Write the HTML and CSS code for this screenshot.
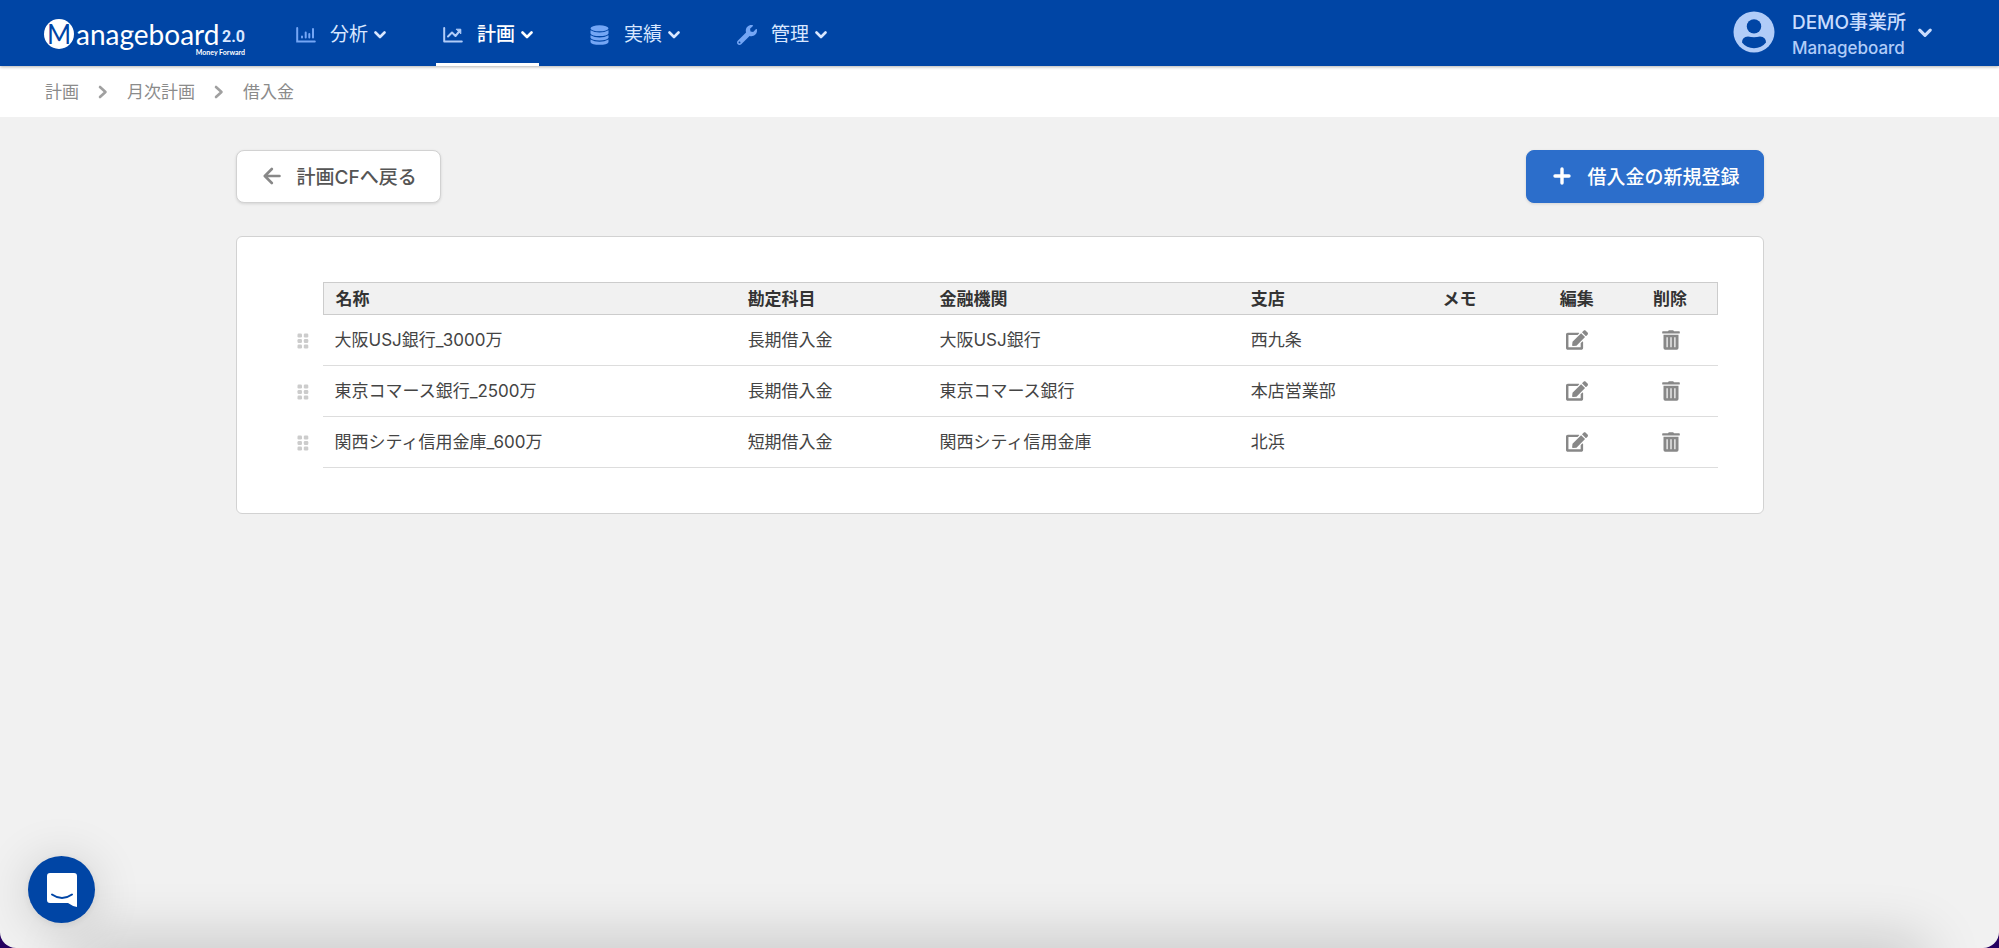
FILE: index.html
```
<!DOCTYPE html>
<html lang="ja">
<head>
    <meta charset="UTF-8">
    <meta name="viewport" content="width=device-width, initial-scale=1.0">
    <title>借入金 | Manageboard</title>
    <link rel="stylesheet" href="styles.css">
</head>
<body>
    <!-- Shared icons -->
    <svg class="sprite" aria-hidden="true">
        <symbol id="chevron-down" viewBox="0 0 12 8">
            <path d="M1.500 1.500 6 6l4.500-4.500" fill="none" stroke="currentColor" stroke-width="2.600" stroke-linecap="round" stroke-linejoin="round"/>
        </symbol>
        <symbol id="chevron-right" viewBox="0 0 10 14">
            <path d="M2 2l5.500 5L2 12" fill="none" stroke="currentColor" stroke-width="2.600" stroke-linecap="round" stroke-linejoin="round"/>
        </symbol>
        <symbol id="grip" viewBox="0 0 12 16">
            <rect x="0.500" y="0.500" width="4.500" height="4" rx="1.200"/><rect x="6.800" y="0.500" width="4.500" height="4" rx="1.200"/>
            <rect x="0.500" y="6" width="4.500" height="4" rx="1.200"/><rect x="6.800" y="6" width="4.500" height="4" rx="1.200"/>
            <rect x="0.500" y="11.500" width="4.500" height="4" rx="1.200"/><rect x="6.800" y="11.500" width="4.500" height="4" rx="1.200"/>
        </symbol>
        <symbol id="edit" viewBox="0 0 576 512">
            <path d="M402.600 83.200l90.200 90.200c3.800 3.800 3.800 10 0 13.800L274.400 405.600l-92.800 10.300c-12.400 1.400-22.900-9.100-21.500-21.500l10.300-92.800L388.800 83.200c3.800-3.800 10-3.800 13.800 0zm162-22.900l-48.800-48.800c-15.200-15.200-39.900-15.200-55.200 0l-35.400 35.400c-3.800 3.800-3.800 10 0 13.800l90.200 90.200c3.800 3.800 10 3.800 13.800 0l35.400-35.400c15.200-15.300 15.200-40 0-55.200zM384 346.200V448H64V128h229.800c3.200 0 6.200-1.300 8.500-3.500l40-40c7.600-7.600 2.200-20.500-8.500-20.500H48C21.500 64 0 85.500 0 112v352c0 26.500 21.500 48 48 48h352c26.500 0 48-21.500 48-48V306.200c0-10.700-12.900-16-20.500-8.500l-40 40c-2.200 2.300-3.500 5.300-3.500 8.500z"/>
        </symbol>
        <symbol id="trash" viewBox="0 0 18 20">
            <path d="M.8 1.300h5.200L6.800.3h4.400l.8 1h5.200q.6 0 .6.600v1q0 .6-.6.600H.8q-.6 0-.6-.6v-1q0-.6.600-.6z"/>
            <path fill-rule="evenodd" d="M1.500 4.800h15v13.200q0 1.700-1.700 1.700H3.200q-1.700 0-1.700-1.700zM4.500 7.200v10h1.200v-10zM8.400 7.200v10h1.200v-10zM12.300 7.200v10h1.200v-10z"/>
        </symbol>
    </svg>

    <header class="navbar">
        <a href="#" class="logo">
            <span class="logo-mark">M</span>
            <span class="logo-name">anageboard</span>
            <span class="logo-version">2.0</span>
            <span class="logo-company">Money Forward</span>
        </a>
        <nav class="menu">
            <a href="#" class="menu-item">
                <svg class="menu-icon" viewBox="0 0 20 20" fill="none" stroke="currentColor" stroke-width="2" stroke-linecap="round">
                    <path d="M1.200 3v13.600h17.600M6 11.500v1M9.700 7.500v5M13.300 9v3.500M17 4v8.500"/>
                </svg>
                <span class="menu-label">分析</span>
                <svg class="menu-arrow"><use href="#chevron-down"/></svg>
            </a>
            <a href="#" class="menu-item active">
                <svg class="menu-icon" viewBox="0 0 20 20" fill="none" stroke="currentColor" stroke-width="2" stroke-linecap="round" stroke-linejoin="round">
                    <path d="M1.200 3v13.600h17.600M5 11.500l4-4 3.500 3.500L17 5.500"/>
                    <path d="M13.500 4.200h4.300v4.300z" fill="currentColor" stroke-width="1"/>
                </svg>
                <span class="menu-label">計画</span>
                <svg class="menu-arrow"><use href="#chevron-down"/></svg>
            </a>
            <a href="#" class="menu-item">
                <svg class="menu-icon" viewBox="0 0 20 20" fill="currentColor">
                    <ellipse cx="9.500" cy="3.300" rx="9" ry="3"/>
                    <path d="M.5 5.200q4 2.400 9 2.400t9-2.400v3.200q-1.500 2.600-9 2.600T.5 8.400z"/>
                    <path d="M.5 10.200q4 2.200 9 2.200t9-2.200v2.600q-1.500 2.600-9 2.600T.5 12.800z"/>
                    <path d="M.5 14.600q4 2.200 9 2.200t9-2.200v2.600q-1.500 2.600-9 2.600T.5 17.200z"/>
                </svg>
                <span class="menu-label">実績</span>
                <svg class="menu-arrow"><use href="#chevron-down"/></svg>
            </a>
            <a href="#" class="menu-item">
                <svg class="menu-icon" viewBox="0 0 512 512" fill="currentColor">
                    <path d="M507.700 109.100c-2.200-9-13.500-12.100-20.100-5.500l-74.400 74.400-67.900-11.300L334 98.900l74.400-74.400c6.600-6.600 3.400-17.900-5.700-20.200-47.400-11.700-99.600.9-136.600 37.900-39.600 39.600-50.500 97.100-34.100 147.200L18.700 402.800c-25 25-25 65.500 0 90.500s65.500 25 90.500 0l213.200-213.200c50.100 16.700 107.500 5.700 147.400-34.200 37.100-37.100 49.700-89.300 37.900-136.800zM64 472c-13.300 0-24-10.700-24-24 0-13.300 10.700-24 24-24s24 10.700 24 24c0 13.300-10.700 24-24 24z"/>
                </svg>
                <span class="menu-label">管理</span>
                <svg class="menu-arrow"><use href="#chevron-down"/></svg>
            </a>
        </nav>
        <button type="button" class="account">
            <svg class="avatar" viewBox="0 0 42 42">
                <circle cx="21" cy="21" r="20.500" fill="#b1ccf8"/>
                <circle cx="21" cy="15.400" r="7.200" fill="#0045a5"/>
                <path d="M9 31.500q0-5.500 6-6 6 1.500 12 0 6 .5 6 6-4.500 5.700-12 5.700T9 31.500z" fill="#0045a5"/>
            </svg>
            <span class="account-text">
                <span class="account-office">DEMO事業所</span>
                <span class="account-user">Manageboard</span>
            </span>
            <svg class="account-arrow"><use href="#chevron-down"/></svg>
        </button>
    </header>

    <nav class="breadcrumb">
        <a href="#">計画</a>
        <svg><use href="#chevron-right"/></svg>
        <a href="#">月次計画</a>
        <svg><use href="#chevron-right"/></svg>
        <span>借入金</span>
    </nav>

    <main class="container">
        <div class="actions">
            <button type="button" class="btn btn-back">
                <svg viewBox="0 0 18 18" fill="none" stroke="currentColor" stroke-width="2.600" stroke-linecap="round" stroke-linejoin="round">
                    <path d="M8.800 2 1.800 9l7 7M2 9h14.500"/>
                </svg>
                計画CFへ戻る
            </button>
            <button type="button" class="btn btn-add">
                <svg viewBox="0 0 18 18" fill="none" stroke="currentColor" stroke-width="3.400" stroke-linecap="round">
                    <path d="M9 2v14M2 9h14"/>
                </svg>
                借入金の新規登録
            </button>
        </div>

        <section class="card">
            <table class="loans">
                <colgroup>
                    <col class="col-grip">
                    <col>
                    <col class="col-account">
                    <col class="col-bank">
                    <col class="col-branch">
                    <col class="col-memo">
                    <col class="col-action">
                    <col class="col-action">
                </colgroup>
                <thead>
                    <tr>
                        <td></td>
                        <th>名称</th>
                        <th>勘定科目</th>
                        <th>金融機関</th>
                        <th>支店</th>
                        <th>メモ</th>
                        <th class="center">編集</th>
                        <th class="center">削除</th>
                    </tr>
                </thead>
                <tbody>
                    <tr>
                        <td class="grip"><svg><use href="#grip"/></svg></td>
                        <td>大阪USJ銀行_3000万</td>
                        <td>長期借入金</td>
                        <td>大阪USJ銀行</td>
                        <td>西九条</td>
                        <td></td>
                        <td class="center"><button type="button" aria-label="編集"><svg class="icon-edit"><use href="#edit"/></svg></button></td>
                        <td class="center"><button type="button" aria-label="削除"><svg class="icon-trash"><use href="#trash"/></svg></button></td>
                    </tr>
                    <tr>
                        <td class="grip"><svg><use href="#grip"/></svg></td>
                        <td>東京コマース銀行_2500万</td>
                        <td>長期借入金</td>
                        <td>東京コマース銀行</td>
                        <td>本店営業部</td>
                        <td></td>
                        <td class="center"><button type="button" aria-label="編集"><svg class="icon-edit"><use href="#edit"/></svg></button></td>
                        <td class="center"><button type="button" aria-label="削除"><svg class="icon-trash"><use href="#trash"/></svg></button></td>
                    </tr>
                    <tr>
                        <td class="grip"><svg><use href="#grip"/></svg></td>
                        <td>関西シティ信用金庫_600万</td>
                        <td>短期借入金</td>
                        <td>関西シティ信用金庫</td>
                        <td>北浜</td>
                        <td></td>
                        <td class="center"><button type="button" aria-label="編集"><svg class="icon-edit"><use href="#edit"/></svg></button></td>
                        <td class="center"><button type="button" aria-label="削除"><svg class="icon-trash"><use href="#trash"/></svg></button></td>
                    </tr>
                </tbody>
            </table>
        </section>
    </main>

    <div class="bottom-shade"></div>
    <button type="button" class="messenger" aria-label="チャット">
        <svg viewBox="0 0 30 34">
            <path d="M3 0h24q3 0 3 3v31q-5-1-9-4H3q-3 0-3-3V3q0-3 3-3z" fill="#ffffff"/>
            <path d="M5 21.500q10 7 20 0" fill="none" stroke="#0045a5" stroke-width="2" stroke-linecap="round"/>
        </svg>
    </button>
</body>
</html>
```

FILE: styles.css
```
* {
    box-sizing: border-box;
}
html {
    background: #250060;
}
body {
    margin: 0;
    min-height: 100vh;
    background: #f1f1f1;
    border-radius: 0 0 16px 16px;
    overflow: hidden;
    position: relative;
    font-family: Inter, "Noto Sans CJK JP", sans-serif;
    font-size: 17px;
    line-height: 24px;
    color: #444444;
}
a {
    color: inherit;
    text-decoration: none;
}
button {
    font-family: inherit;
    cursor: pointer;
}
.sprite {
    display: none;
}

/* Navbar */
.navbar {
    display: flex;
    align-items: stretch;
    height: 66px;
    padding: 0 67px 0 44px;
    background: #0045a5;
    color: #d9e7ff;
    box-shadow: 0 1px 3px rgba(0, 0, 0, 0.3);
    position: relative;
}
.logo {
    display: grid;
    grid-template-columns: 30px auto auto;
    grid-template-rows: 29px 8px;
    column-gap: 2px;
    align-content: start;
    width: 201px;
    padding-top: 19px;
    color: #ffffff;
    font-family: Lato, sans-serif;
}
.logo-mark {
    height: 30px;
    border-radius: 50%;
    background: #ffffff;
    color: #0045a5;
    font-size: 26px;
    line-height: 30px;
    text-align: center;
}
.logo-name {
    font-size: 28px;
    line-height: 30px;
}
.logo-version {
    align-self: end;
    justify-self: end;
    font-family: Roboto, sans-serif;
    font-size: 16px;
    font-weight: 700;
    line-height: 22px;
    color: #d9e7ff;
}
.logo-company {
    grid-column: 1 / 4;
    justify-self: end;
    font-size: 7px;
    font-weight: 700;
    line-height: 8px;
}
.menu {
    display: flex;
    gap: 44px;
    margin-left: 44px;
}
.menu-item {
    display: flex;
    align-items: center;
    padding: 6px 6px 0 7px;
    border-bottom: 3px solid transparent;
    font-size: 19px;
}
.menu-icon {
    width: 20px;
    height: 20px;
    margin-right: 14px;
    color: #74a6f5;
}
.menu-arrow {
    width: 12px;
    height: 8px;
    margin-left: 6px;
}
.active {
    border-bottom-color: #ffffff;
    color: #ffffff;
    font-weight: 500;
}
.active .menu-icon {
    color: #b1ccf8;
}
.account {
    display: flex;
    align-items: center;
    margin-left: auto;
    padding: 0;
    border: 0;
    background: none;
    color: #c9dcfd;
    text-align: left;
}
.avatar {
    width: 42px;
    height: 42px;
    margin: 0 17px 2px 0;
}
.account-text {
    display: flex;
    flex-direction: column;
    padding-top: 3px;
    font-weight: 500;
}
.account-office {
    font-size: 19px;
    line-height: 26px;
}
.account-user {
    font-size: 17px;
    line-height: 24px;
    color: #b1ccf8;
}
.account-arrow {
    width: 14px;
    height: 10px;
    margin-left: 12px;
}

/* Breadcrumb */
.breadcrumb {
    display: flex;
    align-items: center;
    gap: 19px;
    height: 51px;
    padding: 0 45px;
    background: #ffffff;
    color: #8b8b8b;
}
.breadcrumb svg {
    width: 10px;
    height: 14px;
    color: #a0a0a0;
}

/* Content */
.container {
    max-width: 1528px;
    margin: 0 auto;
    padding-top: 33px;
}
.actions {
    display: flex;
    justify-content: space-between;
    margin-bottom: 33px;
}
.btn {
    display: flex;
    align-items: center;
    gap: 16px;
    height: 53px;
    padding: 0 23px 2px 26px;
    border: 1px solid #d2d2d2;
    border-radius: 8px;
    font-size: 19px;
    font-weight: 500;
    box-shadow: 0 1px 3px rgba(0, 0, 0, 0.12);
}
.btn svg {
    width: 18px;
    height: 18px;
}
.btn-back {
    background: #ffffff;
    color: #555555;
}
.btn-back svg {
    color: #888888;
}
.btn-add {
    border-color: #2c6ecb;
    background: #2c6ecb;
    color: #ffffff;
}
.card {
    padding: 45px 45px 45px 60px;
    background: #ffffff;
    border: 1px solid #d2d2d2;
    border-radius: 6px;
}
.loans {
    width: 100%;
    table-layout: fixed;
    border-collapse: separate;
    border-spacing: 0;
}
.col-grip {
    width: 26px;
}
.col-account,
.col-branch {
    width: 13.5%;
}
.col-bank {
    width: 21.9%;
}
.col-memo {
    width: 7%;
}
.col-action {
    width: 6.6%;
}
.loans th {
    height: 33px;
    padding: 0 12px;
    background: #f1f1f1;
    border: 1px solid #cccccc;
    border-width: 1px 0;
    color: #333333;
    font-weight: 700;
    text-align: left;
}
.loans th:nth-child(2) {
    border-left-width: 1px;
}
.loans th:last-child {
    border-right-width: 1px;
}
.loans tbody td {
    height: 51px;
    padding: 0 12px;
    border-bottom: 1px solid #dddddd;
    white-space: nowrap;
}
.loans .center {
    padding: 0;
    text-align: center;
}
.loans .grip {
    padding: 0;
    border-bottom: 0;
    color: #cccccc;
}
.loans svg {
    display: block;
    fill: currentColor;
}
.grip svg {
    width: 12px;
    height: 16px;
}
.loans button {
    display: block;
    margin: 0 auto;
    padding: 0;
    border: 0;
    background: none;
    color: #888888;
}
.icon-edit {
    width: 22px;
    height: 20px;
}
.icon-trash {
    width: 18px;
    height: 20px;
}

/* Overlays */
.bottom-shade {
    position: absolute;
    left: 80px;
    right: 80px;
    bottom: -40px;
    height: 40px;
    box-shadow: 0 0 60px 6px rgba(0, 0, 0, 0.2);
}
.messenger {
    position: fixed;
    left: 28px;
    bottom: 25px;
    display: flex;
    align-items: center;
    justify-content: center;
    width: 67px;
    height: 67px;
    padding: 0;
    border: 0;
    border-radius: 50%;
    background: #0045a5;
    box-shadow: 0 2px 8px rgba(0, 0, 0, 0.08), 0 4px 50px rgba(0, 0, 0, 0.16);
}
.messenger svg {
    width: 30px;
    height: 34px;
}
```
